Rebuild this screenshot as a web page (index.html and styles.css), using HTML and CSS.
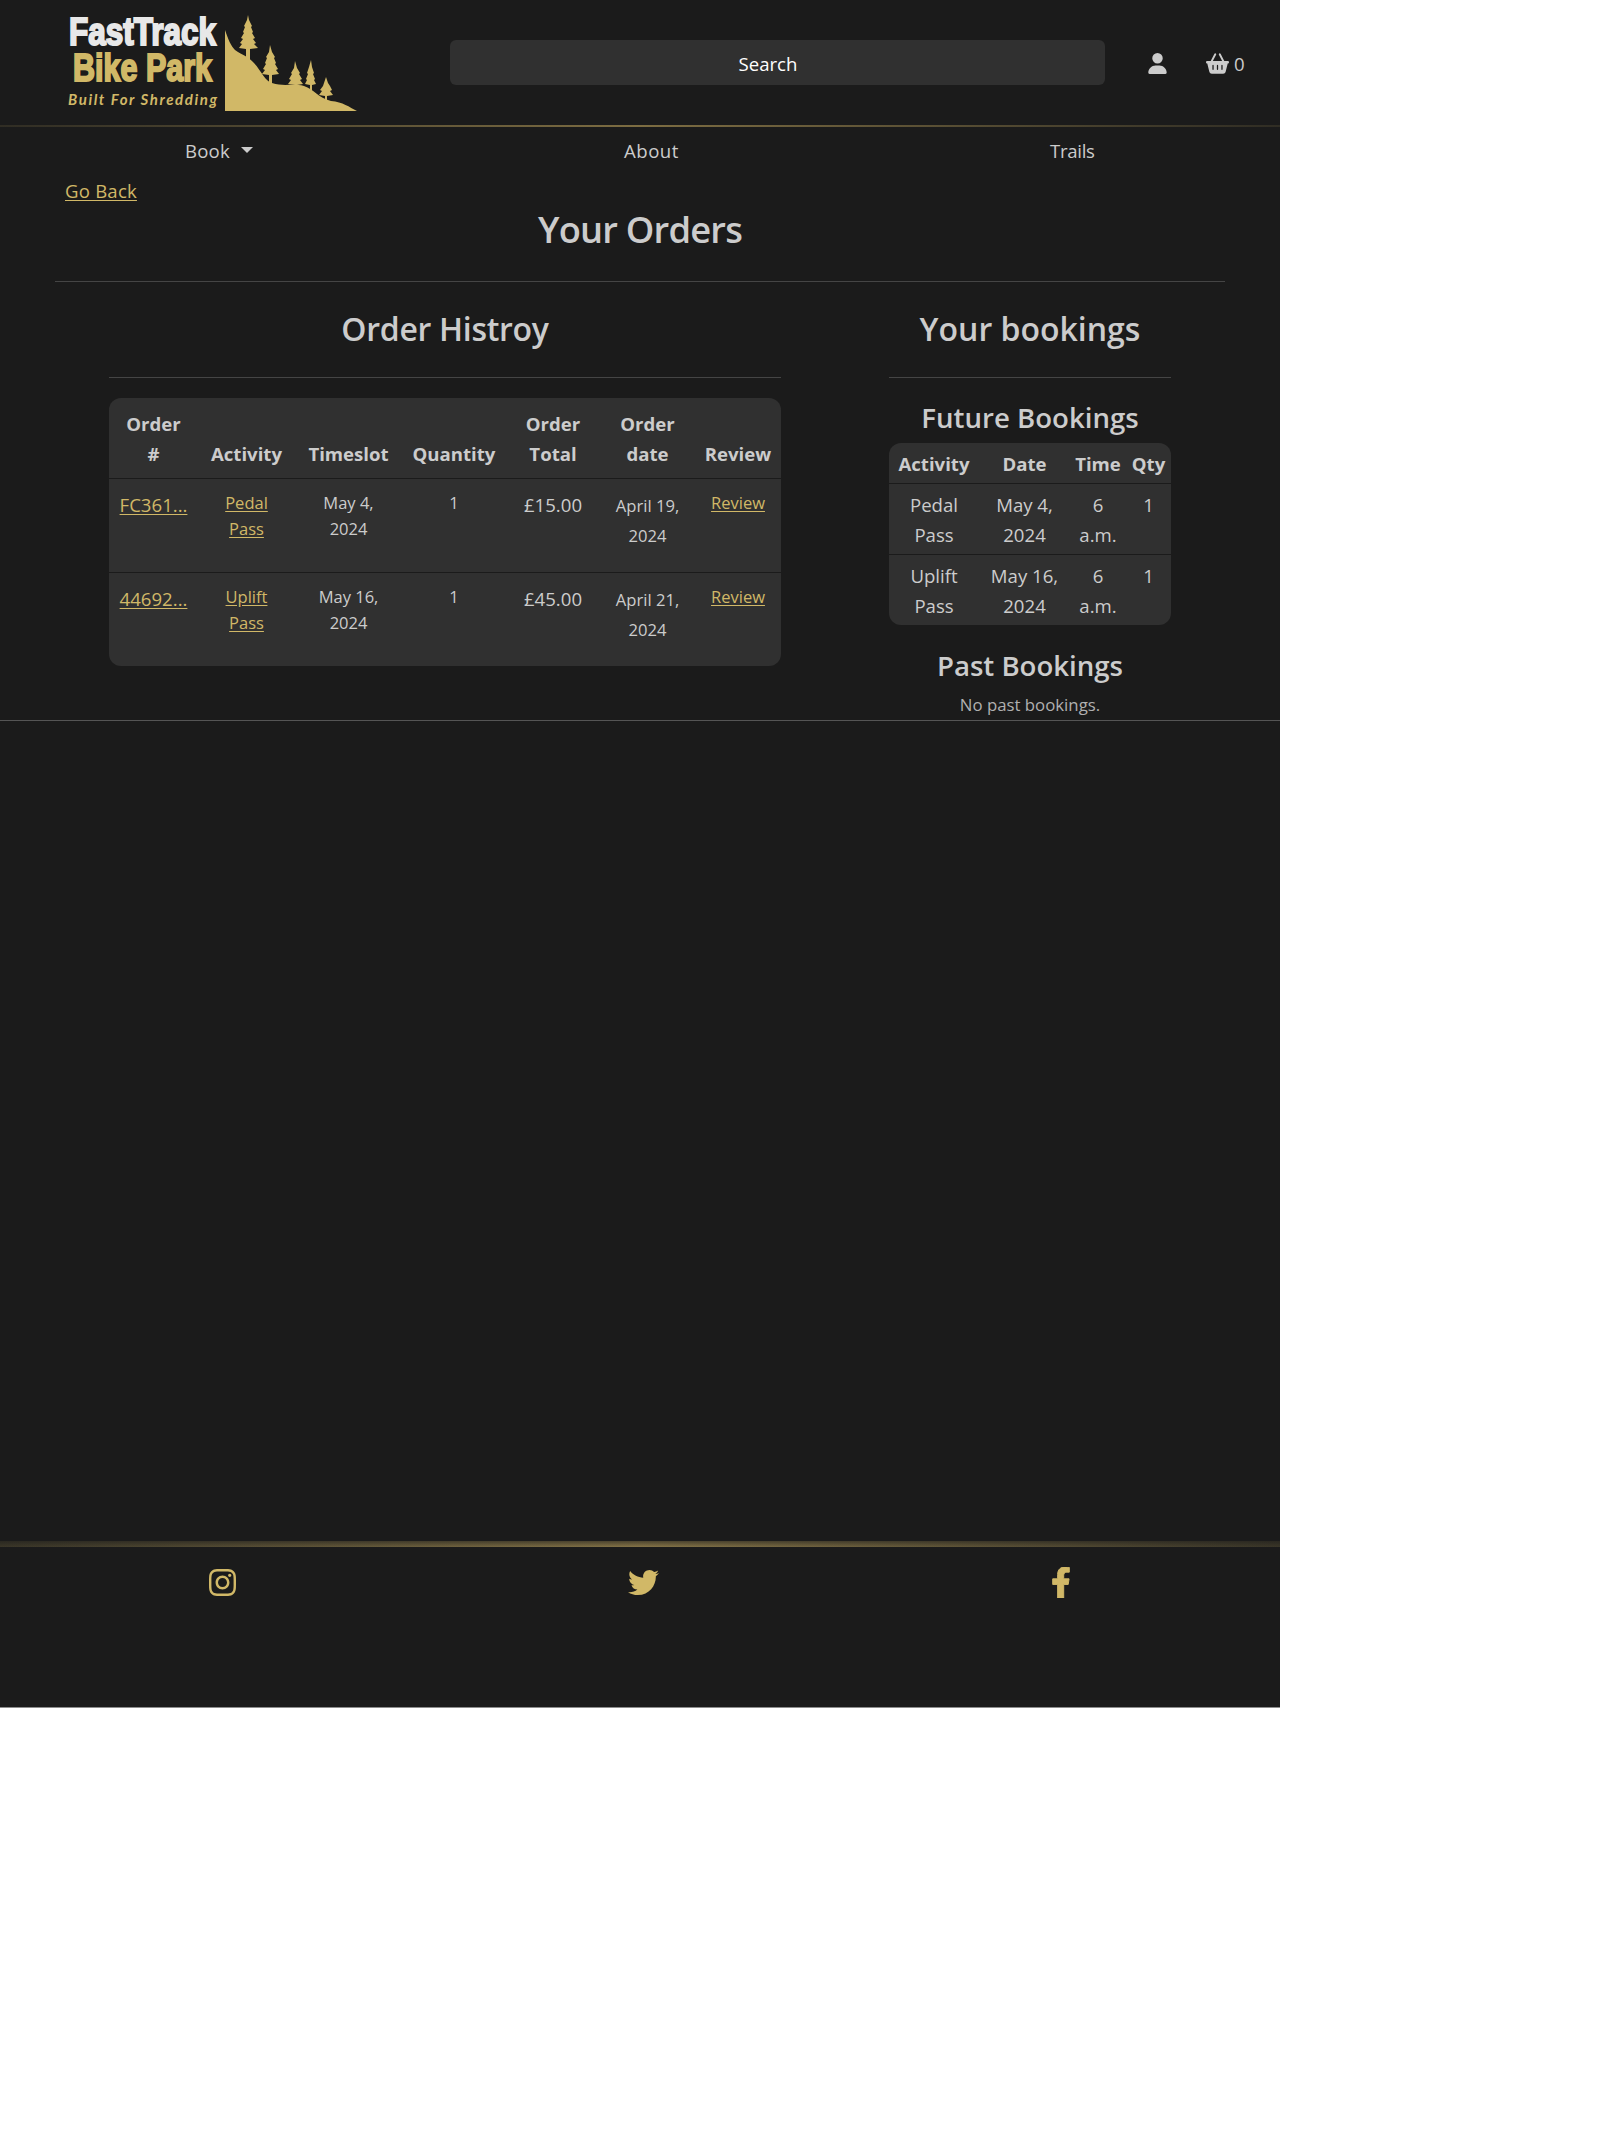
FILE: index.html
```html
<!DOCTYPE html>
<html lang="en">
<head>
<meta charset="utf-8">
<title>FastTrack Bike Park - Your Orders</title>
<link rel="stylesheet" href="styles.css">
</head>
<body>
<div class="page">
  <header class="header">
    <a class="logo">
      <svg width="292" height="100" viewBox="0 0 292 100" role="img" aria-label="FastTrack Bike Park">
        <g class="logo-name">
          <text class="logo-light" x="1" y="33" textLength="147" lengthAdjust="spacingAndGlyphs" font-size="38">FastTrack</text>
          <text class="logo-gold" x="5" y="69" textLength="139" lengthAdjust="spacingAndGlyphs" font-size="38">Bike Park</text>
        </g>
        <text class="logo-tag" x="0" y="93" textLength="149" lengthAdjust="spacing" font-size="15">Built For Shredding</text>
        <g class="logo-hill">
          <path d="M157 18C160 27 163 34 167 38C174 43 180 44 186 51C194 60 197 69 204 71C216 75 225 71 236 74C246 77 250 86 263 89C275 90 281 95 289 99H157Z"/>
          <path d="M178 50V37l-7-1 3-4-2-1 3-4-2-1 3-5-1-1 2-5-1-1 3-6 1-5 1 5 3 6-1 1 2 5-1 1 3 5-2 1 3 4-2 1 4 4-8 1v13z"/>
          <path d="M201 76V63l-7-1 3-4-2-1 3-5-1-1 2-5-1-1 3-5 1-7 2 7 3 5-1 1 2 5-1 1 3 5-2 1 3 4-7 1v13z"/>
          <path d="M227 78v-5l-7-1 3-4-2-1 3-5-1-1 3-5 1-7 2 7 3 5-1 1 3 5-2 1 3 4-6 1v5z"/>
          <path d="M242 80v-7l-5-1 2-4-1-1 2-5-1-1 2-6 2-7 1 7 2 6-1 1 2 5-1 1 2 4-4 1v7z"/>
          <path d="M257 92v-8l-6-1 3-4-2-1 3-4 1-3 2-6 2 6 2 3 2 4-2 1 3 4-6 1v8z"/>
        </g>
      </svg>
    </a>
    <div class="search">Search</div>
    <a class="account"><svg width="19" height="21" viewBox="0 0 448 512"><path d="M224 256A128 128 0 1 0 224 0a128 128 0 1 0 0 256zm-45.700 48C79.800 304 0 383.800 0 482.300C0 498.700 13.300 512 29.700 512H418.300c16.400 0 29.700-13.300 29.700-29.700C448 383.800 368.200 304 269.700 304H178.300z"/></svg></a>
    <a class="basket"><svg width="23" height="21" viewBox="0 0 576 512"><path d="M253.300 35.100c6.100-11.800 1.500-26.300-10.200-32.400s-26.300-1.500-32.400 10.200L117.600 192H32c-17.700 0-32 14.300-32 32s14.300 32 32 32L83.900 463.500C91 492 116.600 512 146 512H430c29.400 0 55-20 62.100-48.500L544 256c17.700 0 32-14.300 32-32s-14.300-32-32-32H458.400L365.300 12.900C359.200 1.200 344.700-3.400 332.900 2.700s-16.300 20.600-10.200 32.400L404.300 192H171.700L253.300 35.100zM192 304v96c0 8.800-7.200 16-16 16s-16-7.200-16-16V304c0-8.800 7.200-16 16-16s16 7.200 16 16zm96-16c8.800 0 16 7.200 16 16v96c0 8.800-7.200 16-16 16s-16-7.200-16-16V304c0-8.800 7.200-16 16-16zm128 16v96c0 8.800-7.200 16-16 16s-16-7.200-16-16V304c0-8.800 7.200-16 16-16s16 7.200 16 16z"/></svg><span>0</span></a>
  </header>
  <div class="rule"></div>
  <nav class="nav"><a class="nav-book">Book<i class="caret"></i></a><a class="nav-about">About</a><a class="nav-trails">Trails</a></nav>
  <main class="main">
    <a class="back link">Go Back</a>
    <h2>Your Orders</h2>
    <div class="columns">
      <section class="history">
        <h3>Order Histroy</h3>
        <table class="orders">
          <colgroup><col class="o1"><col class="o2"><col class="o3"><col class="o4"><col class="o5"><col class="o6"><col class="o7"></colgroup>
          <thead><tr><th>Order<br>#</th><th>Activity</th><th>Timeslot</th><th>Quantity</th><th>Order<br>Total</th><th>Order<br>date</th><th>Review</th></tr></thead>
          <tbody>
            <tr><td><a class="link">FC361...</a></td><td class="small"><a class="link">Pedal<br>Pass</a></td><td class="small">May 4,<br>2024</td><td class="small">1</td><td>£15.00</td><td><small>April 19,<br>2024</small></td><td class="small"><a class="link">Review</a></td></tr>
            <tr><td><a class="link">44692...</a></td><td class="small"><a class="link">Uplift<br>Pass</a></td><td class="small">May 16,<br>2024</td><td class="small">1</td><td>£45.00</td><td><small>April 21,<br>2024</small></td><td class="small"><a class="link">Review</a></td></tr>
          </tbody>
        </table>
      </section>
      <section class="bookings">
        <h3>Your bookings</h3>
        <h4>Future Bookings</h4>
        <table class="future">
          <colgroup><col class="b1"><col class="b2"><col class="b3"><col class="b4"></colgroup>
          <thead><tr><th>Activity</th><th>Date</th><th>Time</th><th>Qty</th></tr></thead>
          <tbody>
            <tr><td>Pedal<br>Pass</td><td>May 4,<br>2024</td><td>6<br>a.m.</td><td>1</td></tr>
            <tr><td>Uplift<br>Pass</td><td>May 16,<br>2024</td><td>6<br>a.m.</td><td>1</td></tr>
          </tbody>
        </table>
        <h4 class="past">Past Bookings</h4>
        <p class="none">No past bookings.</p>
      </section>
    </div>
  </main>
  <footer class="footer">
    <svg width="27" height="31" viewBox="0 0 448 512"><path d="M224.100 141c-63.600 0-114.900 51.300-114.900 114.900s51.300 114.900 114.900 114.900S339 319.500 339 255.900 287.700 141 224.100 141zm0 189.600c-41.100 0-74.700-33.500-74.700-74.700s33.500-74.700 74.700-74.700 74.700 33.500 74.700 74.700-33.600 74.700-74.700 74.700zm146.400-194.300c0 14.900-12 26.800-26.800 26.800-14.900 0-26.800-12-26.800-26.800s12-26.800 26.800-26.800 26.800 12 26.800 26.800zm76.100 27.200c-1.700-35.900-9.900-67.700-36.200-93.900-26.200-26.200-58-34.400-93.900-36.200-37-2.100-147.900-2.100-184.900 0-35.800 1.700-67.600 9.900-93.900 36.100s-34.400 58-36.200 93.900c-2.100 37-2.100 147.900 0 184.900 1.700 35.900 9.900 67.700 36.200 93.900s58 34.400 93.900 36.200c37 2.100 147.900 2.100 184.900 0 35.900-1.700 67.700-9.900 93.900-36.200 26.200-26.200 34.400-58 36.200-93.900 2.100-37 2.100-147.800 0-184.800zM398.800 388c-7.800 19.600-22.900 34.700-42.600 42.600-29.500 11.700-99.500 9-132.100 9s-102.700 2.600-132.100-9c-19.600-7.800-34.700-22.900-42.600-42.600-11.700-29.500-9-99.500-9-132.100s-2.600-102.700 9-132.100c7.800-19.600 22.900-34.700 42.600-42.600 29.500-11.700 99.500-9 132.100-9s102.700-2.600 132.100 9c19.600 7.800 34.700 22.900 42.600 42.600 11.700 29.500 9 99.500 9 132.100s2.700 102.700-9 132.100z"/></svg>
    <svg width="31" height="31" viewBox="0 0 512 512"><path d="M459.370 151.716c.325 4.548.325 9.097.325 13.645 0 138.720-105.583 298.558-298.558 298.558-59.452 0-114.680-17.219-161.137-47.106 8.447.974 16.568 1.299 25.340 1.299 49.055 0 94.213-16.568 130.274-44.832-46.132-.975-84.792-31.188-98.112-72.772 6.498.974 12.995 1.624 19.818 1.624 9.421 0 18.843-1.300 27.614-3.573-48.081-9.747-84.143-51.980-84.143-102.985v-1.299c13.969 7.797 30.214 12.670 47.431 13.319-28.264-18.843-46.781-51.005-46.781-87.391 0-19.492 5.197-37.360 14.294-52.954 51.655 63.675 129.300 105.258 216.365 109.807-1.624-7.797-2.599-15.918-2.599-24.040 0-57.828 46.782-104.934 104.934-104.934 30.213 0 57.502 12.670 76.670 33.137 23.715-4.548 46.456-13.320 66.599-25.340-7.798 24.366-24.366 44.833-46.132 57.827 21.117-2.273 41.584-8.122 60.426-16.243-14.292 20.791-32.161 39.308-52.628 54.253z"/></svg>
    <svg width="20" height="31" viewBox="0 0 320 512"><path d="M279.140 288l14.220-92.660h-88.910v-60.130c0-25.350 12.420-50.060 52.240-50.060h40.420V6.260S260.430 0 225.360 0c-73.220 0-121.080 44.380-121.080 124.720v70.620H22.890V288h81.390v224h100.170V288z" stroke="currentColor" stroke-width="16"/></svg>
  </footer>
</div>
</body>
</html>
```
FILE: styles.css
```css
* { box-sizing: border-box; }
body { margin: 0; background: #fff; }
.page {
  width: 1280px; height: 1708px;
  display: flex; flex-direction: column;
  background: #1b1b1b; color: #ccc;
  border-bottom: 1px solid #8d8d8d;
  font: 18.6px/30px "Open Sans", "Noto Sans", sans-serif;
}
svg { display: block; fill: currentColor; flex: none; }
.link { color: #d1b867; text-decoration: underline; text-underline-offset: 2px; }

.header { height: 125px; display: flex; align-items: center; }
.logo { margin: 0 22px 0 68px; width: 360px; height: 101px; }
.logo svg { overflow: visible; }
.logo-name { font-family: "Liberation Sans Narrow", "Liberation Sans", sans-serif; font-weight: 700; stroke-width: 2px; }
.logo-light { fill: #e8e8e8; stroke: #e8e8e8; }
.logo-gold { fill: #d1b867; stroke: #d1b867; }
.logo-tag { font-family: Lato, sans-serif; font-style: italic; font-weight: 700; fill: #d1b867; }
.logo-hill { fill: #d1b867; }
.search { width: 655px; height: 45px; padding-right: 19px; border-radius: 6px; background: #303030; color: #fff; text-align: center; line-height: 47px; }
.account { margin-left: 43px; padding-top: 2px; }
.basket { margin-left: 39px; padding-top: 2px; display: flex; align-items: center; gap: 5px; }
.rule { height: 2px; background: linear-gradient(90deg, #302d24, #7d6d42 50%, #302d24); }
.nav { height: 48px; padding-top: 9px; display: flex; }
.nav a { flex: none; }
.nav-book { margin-left: 185px; width: 439px; letter-spacing: .2px; }
.nav-about { width: 426px; letter-spacing: .5px; }
.nav-trails { letter-spacing: -.3px; }
.caret { display: inline-block; margin-left: 11px; vertical-align: 5px; border: 6px solid transparent; border-top-color: #ccc; border-bottom: 0; }

.main { flex: none; height: 546px; border-bottom: 1px solid #555; }
.back { display: block; width: max-content; margin-left: 65px; padding-top: 1px; letter-spacing: .2px; }
h2, h3, h4 { margin: 0; font-weight: 600; text-align: center; }
h2 { margin: 0 55px; height: 76px; font-size: 36.3px; letter-spacing: -.8px; line-height: 46px; border-bottom: 1px solid #454545; }
.columns { display: flex; padding: 0 109px; justify-content: space-between; }
.history { width: 672px; }
.history h3 { letter-spacing: -.3px; }
.bookings { width: 282px; }
h3 { height: 96px; padding-top: 23px; font-size: 32px; line-height: 48px; border-bottom: 1px solid #454545; }
h4 { height: 45px; margin-top: 20px; font-size: 27.6px; line-height: 38px; }
table { table-layout: fixed; width: 100%; border-spacing: 0; background: #303030; border-radius: 12px; text-align: center; }
th, td { padding: 0; vertical-align: top; }
th { vertical-align: bottom; font-weight: 700; }
tbody td { border-top: 1px solid #1b1b1b; }
.orders { margin-top: 20px; }
.orders th { height: 80px; padding-bottom: 9px; }
.orders td { height: 94px; padding-top: 11px; }
.orders .small { font-size: 16.5px; line-height: 26px; }
small { display: block; font-size: 16.6px; padding-top: 1px; }
.o1 { width: 89px; } .o2 { width: 97px; } .o3 { width: 107px; } .o4 { width: 104px; }
.o5 { width: 94px; } .o6 { width: 95px; } .o7 { width: 86px; }
.future th { height: 40px; padding-bottom: 4px; }
.future td { height: 71px; padding-top: 6px; }
.b1 { width: 90px; } .b2 { width: 91px; } .b3 { width: 56px; } .b4 { width: 45px; }
.past { height: 44px; margin-top: 21px; }
.none { margin: 0; text-align: center; font-size: 16.8px; color: #b0b0b0; }

.footer {
  margin-top: auto; height: 166px; padding: 26px 209px 0;
  display: flex; justify-content: space-between; align-items: flex-start;
  color: #d1b867;
  background: linear-gradient(#1b1b1b88, #1b1b1b00) 0 0 / 100% 6px no-repeat, linear-gradient(90deg, #3a3628, #857447 50%, #3a3628) 0 0 / 100% 6px no-repeat;
}
```
